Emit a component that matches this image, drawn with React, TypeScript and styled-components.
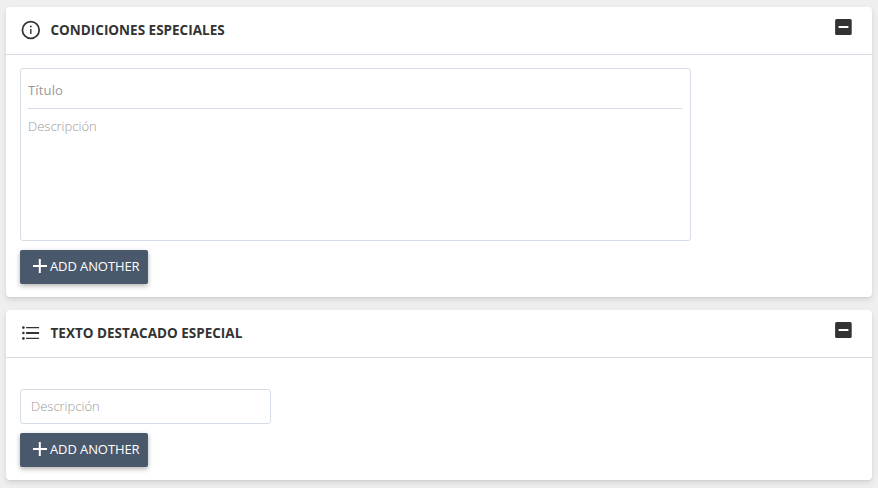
import React from "react";
import styled, { createGlobalStyle } from "styled-components";

const GlobalStyle = createGlobalStyle`
  *, *::before, *::after { box-sizing: border-box; }
  html, body { height: 100%; overflow: hidden; }
  body {
    margin: 0;
    background: #efefef;
    color: #333;
    font-family: "Open Sans", "Noto Sans", sans-serif;
    font-size: 13px;
  }
`;

const Page = styled.main`
  display: flex;
  flex-direction: column;
  gap: 13px;
  padding: 7px 6px 8px;
`;

const Card = styled.section<{ $height: number }>`
  height: ${(p) => p.$height}px;
  background: #fff;
  border-radius: 4px;
  box-shadow: 0 3px 6px rgba(0, 0, 0, 0.1), 0 1px 2px rgba(0, 0, 0, 0.06);
`;

const CardHeader = styled.header`
  display: flex;
  align-items: flex-start;
  height: 48px;
  padding: 9px 18px 0 14px;
  border-bottom: 1px solid #d6dce5;
`;

const CardIcon = styled.span`
  display: flex;
  margin: 3px 8.5px 0 0;
`;

const Title = styled.h2`
  flex: 1;
  margin: 0;
  font-size: 13.5px;
  font-weight: 700;
  line-height: 28px;
  letter-spacing: 0;
`;

const CollapseButton = styled.button`
  display: flex;
  padding: 0;
  border: 0;
  background: none;
  color: #333;
`;

const CardBody = styled.div<{ $top: number }>`
  display: flex;
  flex-direction: column;
  align-items: flex-start;
  gap: 9px;
  padding: ${(p) => p.$top}px 14px 0;
`;

const ConditionBox = styled.div`
  display: flex;
  flex-direction: column;
  width: 671px;
  height: 173px;
  padding: 4px 7px;
  border: 1px solid #d6dce5;
  border-radius: 3px;
`;

const TitleInput = styled.input`
  width: 654px;
  height: 36px;
  padding: 0 0 2px;
  border: 0;
  border-bottom: 1px solid #d6dce5;
  outline: 0;
  font: 400 13px "Open Sans", sans-serif;
  letter-spacing: 0.15px;
  &::placeholder { color: #999; opacity: 1; }
`;

const DescriptionArea = styled.textarea`
  flex: 1;
  padding: 8px 0;
  border: 0;
  outline: 0;
  resize: none;
  font: 300 13px/18px "Open Sans", sans-serif;
  &::placeholder { color: #999; opacity: 1; }
`;

const DescriptionInput = styled.input`
  width: 251px;
  height: 35px;
  padding: 0 10px 2px;
  border: 1px solid #d6dce5;
  border-radius: 3px;
  outline: 0;
  font: 300 13px "Open Sans", sans-serif;
  &::placeholder { color: #999; opacity: 1; }
`;

const AddButton = styled.button`
  display: flex;
  align-items: center;
  gap: 3px;
  width: 128px;
  height: 34px;
  padding: 0 0 2px 13px;
  border: 0;
  border-radius: 2px;
  background: #4a586b;
  color: #fff;
  box-shadow: 0 2px 5px rgba(0, 0, 0, 0.3);
  font: 400 13px "Open Sans", sans-serif;
  letter-spacing: -0.1px;
  white-space: nowrap;
`;

const InfoIcon = () => (
  <svg width="22" height="22" viewBox="0 0 22 22" fill="none">
    <circle cx="10.8" cy="11" r="8.4" stroke="#333" strokeWidth="1.7" />
    <path d="M10.8 10v5" stroke="#333" strokeWidth="1.4" />
    <circle cx="10.8" cy="7.5" r="0.9" fill="#333" />
  </svg>
);

const ListIcon = () => (
  <svg width="22" height="22" viewBox="0 0 22 22" fill="#333">
    <circle cx="3.4" cy="5.6" r="1.3" />
    <circle cx="3.4" cy="11" r="1.3" />
    <circle cx="3.4" cy="16.4" r="1.3" />
    <path d="M6.1 4.9h13v1.3h-13zM6.1 10.1h13v1.8h-13zM6.1 15.8h13v1.3h-13z" />
  </svg>
);

const MinusBoxIcon = () => (
  <svg width="22" height="22" viewBox="0 0 22 22">
    <rect x="3.1" y="3" width="16.6" height="16" rx="1.6" fill="currentColor" />
    <path d="M6.6 10h9.8v2H6.6z" fill="#fff" />
  </svg>
);

const PlusIcon = () => (
  <svg width="14" height="14" viewBox="0 0 14 14">
    <path d="M6.8 0v14M0 7h14" stroke="#fff" strokeWidth="2" />
  </svg>
);

const SectionHeader = ({ icon, title }: { icon: React.ReactNode; title: string }) => (
  <CardHeader>
    <CardIcon>{icon}</CardIcon>
    <Title>{title}</Title>
    <CollapseButton aria-label="Contraer">
      <MinusBoxIcon />
    </CollapseButton>
  </CardHeader>
);

const AddAnother = () => (
  <AddButton type="button">
    <PlusIcon />
    <span>ADD ANOTHER</span>
  </AddButton>
);

export default function App() {
  return (
    <>
      <GlobalStyle />
      <Page>
        <Card $height={290}>
          <SectionHeader icon={<InfoIcon />} title="CONDICIONES ESPECIALES" />
          <CardBody $top={13}>
            <ConditionBox>
              <TitleInput placeholder="Título" />
              <DescriptionArea placeholder="Descripción" />
            </ConditionBox>
            <AddAnother />
          </CardBody>
        </Card>
        <Card $height={170}>
          <SectionHeader icon={<ListIcon />} title="TEXTO DESTACADO ESPECIAL" />
          <CardBody $top={31}>
            <DescriptionInput placeholder="Descripción" />
            <AddAnother />
          </CardBody>
        </Card>
      </Page>
    </>
  );
}
